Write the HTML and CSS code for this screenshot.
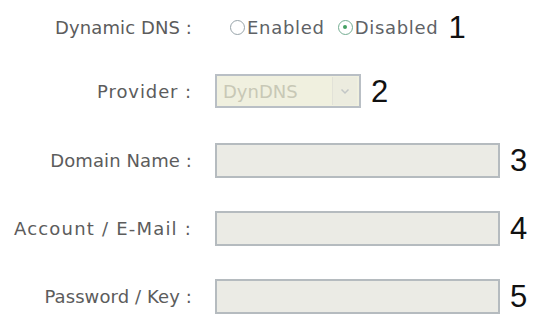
FILE: index.html
```html
<!DOCTYPE html>
<html>
<head>
<meta charset="utf-8">
<link rel="stylesheet" href="styles.css">
</head>
<body>
<div class="form">
  <div class="row r1">
    <span class="label">Dynamic DNS :</span>
    <div class="field radios">
      <span class="radio"></span><span class="opt">Enabled</span>
      <span class="radio on"></span><span class="opt">Disabled</span>
      <span class="num n1">1</span>
    </div>
  </div>
  <div class="row r2">
    <span class="label wide">Provider :</span>
    <div class="field">
      <div class="select"><span class="sel-text">DynDNS</span><span class="sel-btn"><svg width="10" height="7" viewBox="0 0 10 7"><path d="M1.5 1.5 L5 5 L8.5 1.5" fill="none" stroke="#c2c6c6" stroke-width="1.5"/></svg></span></div>
      <span class="num n2">2</span>
    </div>
  </div>
  <div class="row r3">
    <span class="label">Domain Name :</span>
    <div class="field"><div class="box"></div><span class="num">3</span></div>
  </div>
  <div class="row r4">
    <span class="label wider">Account / E-Mail :</span>
    <div class="field"><div class="box"></div><span class="num">4</span></div>
  </div>
  <div class="row r5">
    <span class="label">Password / Key :</span>
    <div class="field"><div class="box"></div><span class="num">5</span></div>
  </div>
</div>
</body>
</html>
```
FILE: styles.css
```css
html, body { margin: 0; padding: 0; background: #fff; }
body { width: 540px; height: 318px; overflow: hidden; font-family: "DejaVu Sans", sans-serif; }
.form { display: flex; flex-direction: column; }
.row { display: grid; grid-template-columns: 192px 1fr; column-gap: 23px; align-items: center; height: 36px; }
.r1 { margin-top: 9px; }
.r2 { margin-top: 28px; }
.r3 { margin-top: 33px; }
.r4 { margin-top: 32px; }
.r5 { margin-top: 32px; }
.label { text-align: right; color: #5c5c5c; font-size: 18px; letter-spacing: 0.1px; white-space: nowrap; }
.label.wide { letter-spacing: 0.9px; }
.label.wider { letter-spacing: 1.2px; }
.field { display: flex; align-items: center; }
.radios { margin-left: 15px; }
.radio { width: 15px; height: 15px; border-radius: 50%; border: 1.5px solid #98a4aa; box-sizing: border-box; background: #fff; margin-right: 2px; position: relative; }
.radio.on { border-color: #74ad92; margin-left: 13px; }
.radio.on::after { content: ""; position: absolute; left: 4px; top: 4px; width: 4px; height: 4px; border-radius: 50%; background: #44a062; }
.opt { color: #5e6266; font-size: 18px; letter-spacing: 0.7px; }
.num { font-family: "Liberation Sans", Arial, sans-serif; font-size: 31px; color: #111; margin-left: 10px; line-height: 1; }
.n1 { margin-left: 10px; }
.select { width: 146px; height: 34px; box-sizing: border-box; border: 2px solid #b9bfc5; background: #f0f0df; display: flex; align-items: center; }
.sel-text { flex: 1; color: #c8c8b6; font-size: 18px; padding-left: 6px; }
.sel-btn { width: 24px; height: 28px; margin-right: 2px; background: #ececdf; border-left: 1px solid #e2e2d8; display: flex; align-items: center; justify-content: center; }
.box { width: 285px; height: 35px; box-sizing: border-box; border: 2px solid #b5bbbf; background: #ebebe5; }
```
